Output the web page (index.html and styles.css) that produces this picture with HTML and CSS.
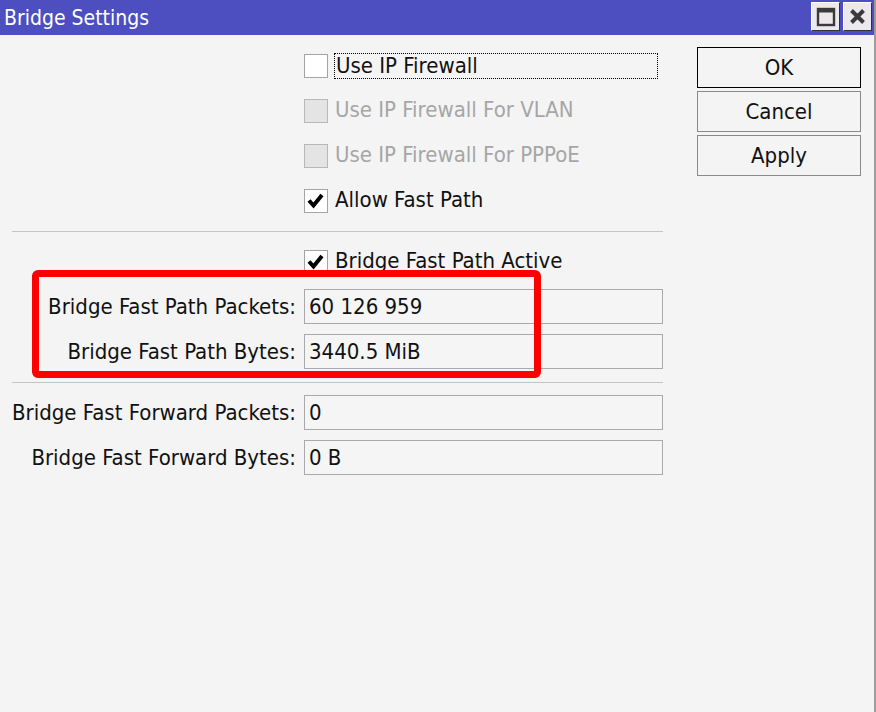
FILE: index.html
```html
<!DOCTYPE html>
<html>
<head>
<meta charset="utf-8">
<link rel="stylesheet" href="styles.css">
</head>
<body>
<div class="window">
  <div class="titlebar">
    <span class="title">Bridge Settings</span>
    <div class="tb-buttons">
      <div class="tb-btn">
        <svg width="27" height="27" viewBox="0 0 27 27"><rect x="6" y="6" width="16" height="16" fill="none" stroke="#3a3a3a" stroke-width="2.4"/><rect x="6" y="5.5" width="16" height="4" fill="#3a3a3a"/></svg>
      </div>
      <div class="tb-btn">
        <svg width="27" height="27" viewBox="0 0 27 27"><path d="M7.5 7.5 L19.5 19.5 M19.5 7.5 L7.5 19.5" stroke="#3a3a3a" stroke-width="4"/></svg>
      </div>
    </div>
  </div>
  <div class="content">
    <div class="form">
      <div class="cell-empty"></div>
      <div class="check-cell">
        <span class="box"></span>
        <span class="check-label focused">Use IP Firewall</span>
      </div>

      <div class="cell-empty"></div>
      <div class="check-cell disabled">
        <span class="box"></span>
        <span class="check-label">Use IP Firewall For VLAN</span>
      </div>

      <div class="cell-empty"></div>
      <div class="check-cell disabled">
        <span class="box"></span>
        <span class="check-label">Use IP Firewall For PPPoE</span>
      </div>

      <div class="cell-empty"></div>
      <div class="check-cell">
        <span class="box"><svg width="22" height="22" viewBox="0 0 22 22"><polyline points="4,10.5 8.5,15.5 17,5" fill="none" stroke="#000" stroke-width="4"/></svg></span>
        <span class="check-label">Allow Fast Path</span>
      </div>

      <div class="sep"></div>

      <div class="cell-empty"></div>
      <div class="check-cell">
        <span class="box"><svg width="22" height="22" viewBox="0 0 22 22"><polyline points="4,10.5 8.5,15.5 17,5" fill="none" stroke="#000" stroke-width="4"/></svg></span>
        <span class="check-label">Bridge Fast Path Active</span>
      </div>

      <div class="label">Bridge Fast Path Packets:</div>
      <div class="field-cell"><div class="field">60 126 959</div></div>

      <div class="label">Bridge Fast Path Bytes:</div>
      <div class="field-cell"><div class="field">3440.5 MiB</div></div>

      <div class="sep"></div>

      <div class="label">Bridge Fast Forward Packets:</div>
      <div class="field-cell"><div class="field">0</div></div>

      <div class="label">Bridge Fast Forward Bytes:</div>
      <div class="field-cell"><div class="field">0 B</div></div>
    </div>
    <div class="actions">
      <div class="btn default">OK</div>
      <div class="btn">Cancel</div>
      <div class="btn">Apply</div>
    </div>
  </div>
  <div class="highlight"></div>
</div>
</body>
</html>
```
FILE: styles.css
```css
* { box-sizing: border-box; }
html, body { margin: 0; padding: 0; }
body {
  font-family: "DejaVu Sans Condensed", "DejaVu Sans", sans-serif;
  font-stretch: condensed;
  font-size: 22px;
  color: #111;
  background: #f4f4f4;
}
.window {
  position: relative;
  width: 876px;
  height: 712px;
  background: #f4f4f4;
  border-right: 2px solid #9c9c9c;
}
.titlebar {
  height: 35px;
  background: #4d4fc0;
  display: flex;
  align-items: flex-start;
  justify-content: space-between;
}
.title {
  color: #fff;
  font-size: 21px;
  padding-left: 4px;
  line-height: 37px;
}
.tb-buttons {
  display: flex;
  gap: 3px;
  margin-top: 2px;
  margin-right: 2px;
}
.tb-btn {
  width: 29px;
  height: 29px;
  background: #ece8ec;
  border-top: 1px solid #ffffff;
  border-left: 1px solid #ffffff;
  border-right: 1px solid #333;
  border-bottom: 1px solid #333;
}
.tb-btn svg { display: block; }
.content {
  display: flex;
  align-items: flex-start;
}
.form {
  display: grid;
  grid-template-columns: 292px 359px;
  margin-left: 12px;
  padding-top: 8px;
}
.cell-empty { height: 45px; }
.check-cell {
  height: 45px;
  display: flex;
  align-items: center;
  gap: 6px;
}
.box {
  width: 24px;
  height: 24px;
  border: 1px solid #a4a4a4;
  background: #fff;
  flex: none;
  display: flex;
  align-items: center;
  justify-content: center;
}
.box svg { display: block; }
.check-label {
  line-height: 24px;
  height: 26px;
  padding: 0 1px;
  white-space: nowrap;
}
.check-label.focused {
  border: 1px dotted #000;
  width: 324px;
}
.disabled .box {
  background: #e4e4e4;
  border-color: #b8b8b8;
}
.disabled .check-label { color: #a6a6a6; }
.sep {
  grid-column: 1 / -1;
  height: 1px;
  background: #c4c4c4;
  margin: 8px 0 7px;
}
.label {
  height: 45px;
  display: flex;
  align-items: center;
  justify-content: flex-end;
  padding-right: 8px;
  white-space: nowrap;
}
.field-cell {
  height: 45px;
  display: flex;
  align-items: center;
}
.field {
  width: 359px;
  height: 35px;
  border: 1px solid #a9a9a9;
  background: #f5f5f5;
  padding-left: 4px;
  line-height: 33px;
  white-space: nowrap;
}
.actions {
  margin-left: 34px;
  padding-top: 12px;
  display: flex;
  flex-direction: column;
  gap: 3px;
}
.btn {
  width: 164px;
  height: 41px;
  border: 1px solid #8a8a8a;
  background: #f4f4f4;
  text-align: center;
  line-height: 39px;
}
.btn.default { border-color: #000; }
.highlight {
  position: absolute;
  left: 32px;
  top: 270px;
  width: 509px;
  height: 108px;
  border: 7px solid #ff0000;
  border-radius: 6px;
}
```
